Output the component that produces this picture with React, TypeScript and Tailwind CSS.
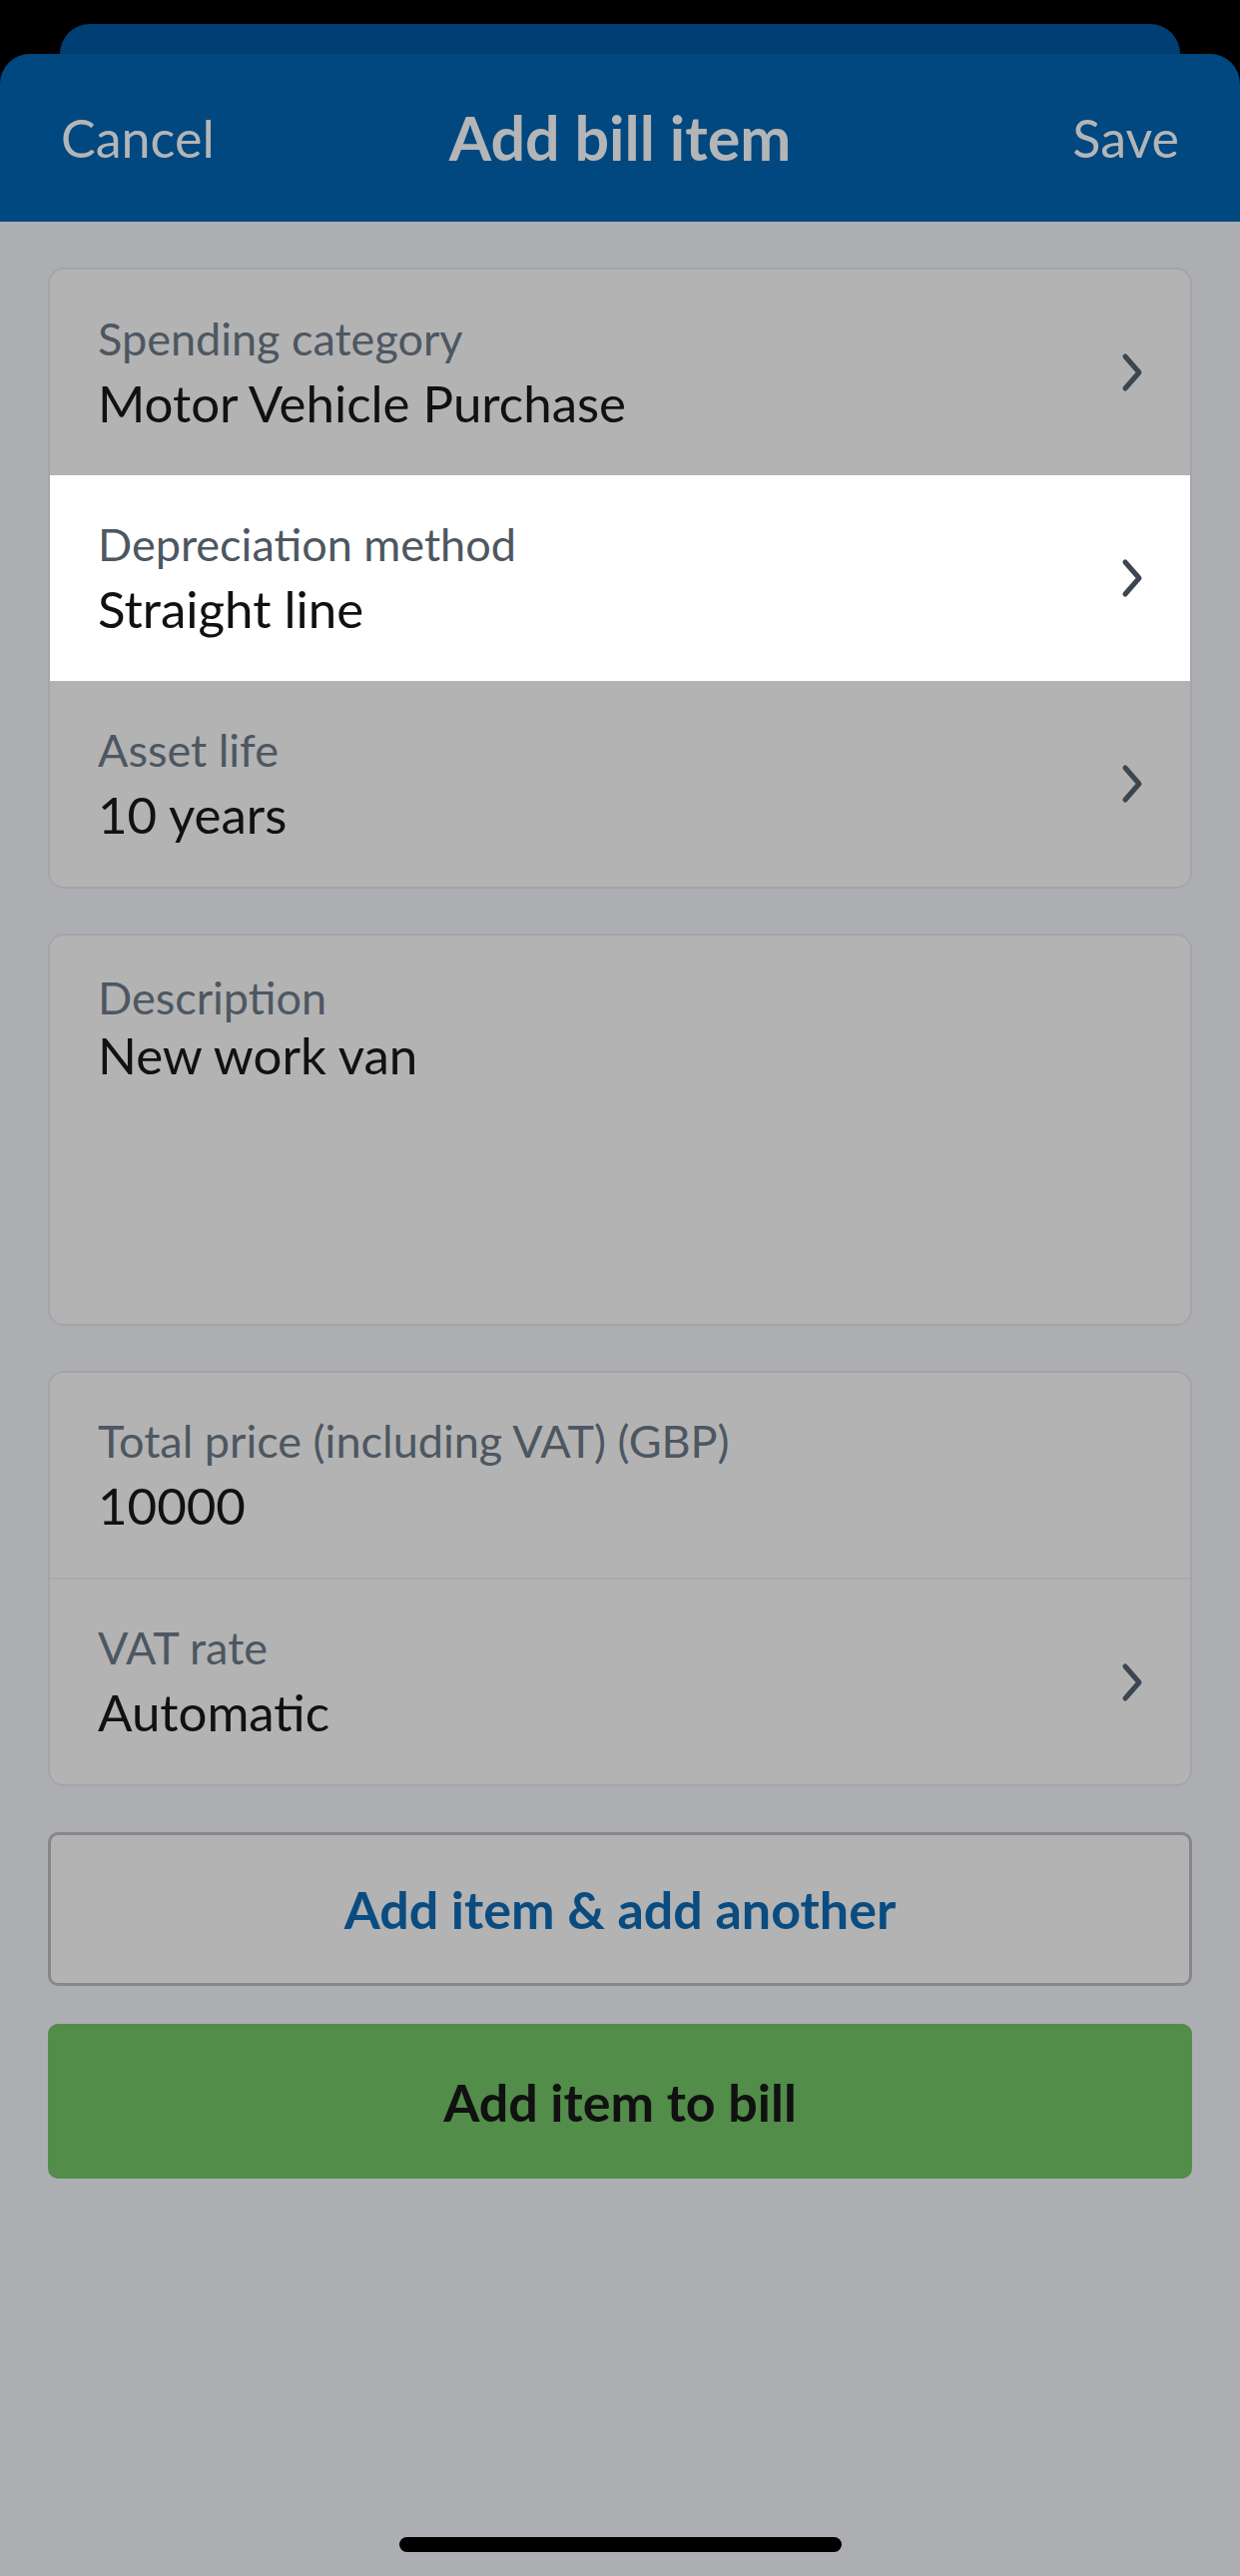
import { ReactNode } from "react";

function Chevron() {
  return (
    <svg width="26" height="40" viewBox="0 0 26 40" fill="none" className="shrink-0">
      <path
        d="M5 4 L19 20 L5 36"
        stroke="#3b4651"
        strokeWidth="5"
        strokeLinecap="round"
        strokeLinejoin="round"
      />
    </svg>
  );
}

function Row({
  label,
  value,
  chevron = true,
  active = false,
  divider = false,
  tall = false,
}: {
  label: string;
  value: string;
  chevron?: boolean;
  active?: boolean;
  divider?: boolean;
  tall?: boolean;
}) {
  return (
    <div
      className={`${tall ? "h-[206px]" : "h-[205px]"} flex items-center justify-between pl-[48px] pr-[44px] ${
        active ? "bg-white" : ""
      } ${divider ? "h-[207px] border-t-2 border-[#aaabac]" : ""}`}
    >
      <div className="flex flex-col">
        <span className="text-[45px] leading-[50px] text-[#4d5761]">{label}</span>
        <span className="text-[51px] leading-[58px] text-[#111111] mt-[11px]">{value}</span>
      </div>
      {chevron && <Chevron />}
    </div>
  );
}

function Card({ children }: { children: ReactNode }) {
  return (
    <div className="bg-[#b3b3b3] border-2 border-[#a4a5a8] rounded-[16px] overflow-hidden">
      {children}
    </div>
  );
}

export default function App() {
  return (
    <main
      className="min-h-[2580px] bg-black flex flex-col pt-[24px]"
      style={{ fontFamily: "Lato, 'Open Sans', sans-serif" }}
    >
      {/* Sheet behind */}
      <div className="mx-[60px] h-[30px] rounded-t-[30px] bg-[#003e74]" />

      {/* Header */}
      <header className="h-[168px] bg-[#00487f] rounded-t-[30px] grid grid-cols-[1fr_auto_1fr] items-center px-[61px] text-[#b4b5b7]">
        <span className="text-[52px] justify-self-start">Cancel</span>
        <span className="text-[61px] font-bold">Add bill item</span>
        <span className="text-[52px] justify-self-end">Save</span>
      </header>

      {/* Body */}
      <div className="flex-1 bg-[#adaeb2] flex flex-col px-[48px] pt-[46px] pb-[24px]">
        <div className="flex flex-col gap-[45px]">
          <Card>
            <Row label="Spending category" value="Motor Vehicle Purchase" tall />
            <Row label="Depreciation method" value="Straight line" active tall />
            <Row label="Asset life" value="10 years" tall />
          </Card>

          <Card>
            <div className="h-[389px] pl-[48px] pt-[37px] flex flex-col">
              <span className="text-[45px] leading-[50px] text-[#4d5761]">Description</span>
              <span className="text-[51px] leading-[58px] text-[#111111] mt-[4px]">
                New work van
              </span>
            </div>
          </Card>

          <Card>
            <Row label="Total price (including VAT) (GBP)" value="10000" chevron={false} />
            <Row label="VAT rate" value="Automatic" divider />
          </Card>
        </div>

        <button className="mt-[46px] h-[154px] bg-[#b3b3b3] border-[3px] border-[#86878b] rounded-[10px] text-[52px] font-bold text-[#0b4c80]">
          Add item &amp; add another
        </button>

        <button className="mt-[38px] h-[155px] bg-[#528d4a] rounded-[10px] text-[52px] font-bold text-[#111111]">
          Add item to bill
        </button>

        <div className="flex-1" />
        <div className="self-center w-[443px] h-[15px] rounded-full bg-black" />
      </div>
    </main>
  );
}
